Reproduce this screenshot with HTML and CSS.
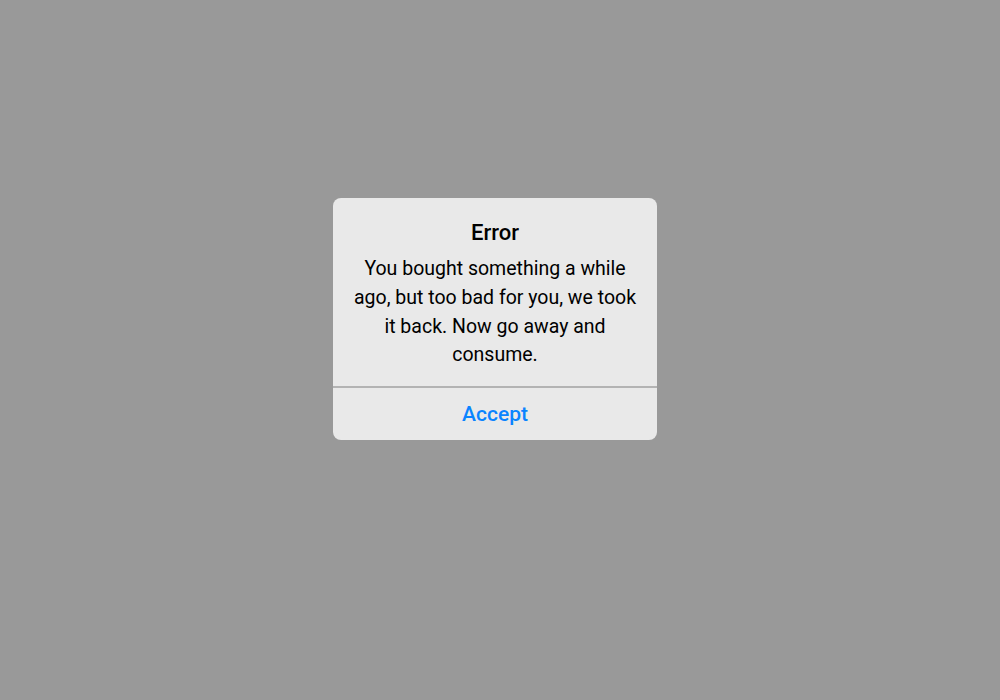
FILE: index.html
```html
<!DOCTYPE html>
<html lang="en">
<head>
<meta charset="utf-8">
<title>Error</title>
<link rel="stylesheet" href="styles.css">
</head>
<body>
<div class="stage">
  <div class="dialog" role="alertdialog">
    <div class="dialog-content">
      <h2 class="dialog-title">Error</h2>
      <p class="dialog-message">You bought something a while ago, but too bad for you, we took it back. Now go away and consume.</p>
    </div>
    <button class="dialog-button" type="button">Accept</button>
  </div>
</div>
</body>
</html>
```

FILE: styles.css
```css
html, body {
  margin: 0;
  padding: 0;
  height: 100%;
}
body {
  background: #999999;
  font-family: Roboto, "Liberation Sans", sans-serif;
}
.stage {
  display: flex;
  justify-content: flex-start;
  align-items: flex-start;
  padding: 198px 0 0 333px;
}
.dialog {
  width: 324px;
  background: #e9e9e9;
  border-radius: 8px;
  display: flex;
  flex-direction: column;
  overflow: hidden;
}
.dialog-content {
  padding: 21px 20px 16px;
  text-align: center;
  border-bottom: 2px solid #b3b3b3;
}
.dialog-title {
  margin: 0;
  font-size: 22px;
  line-height: 28px;
  font-weight: 500;
  color: #000;
}
.dialog-message {
  margin: 8px 0 0;
  font-size: 19.5px;
  line-height: 28.8px;
  color: #000;
}
.dialog-button {
  height: 52px;
  border: 0;
  background: transparent;
  font-family: inherit;
  font-size: 21px;
  font-weight: 500;
  color: #0a84ff;
  cursor: pointer;
}
```
